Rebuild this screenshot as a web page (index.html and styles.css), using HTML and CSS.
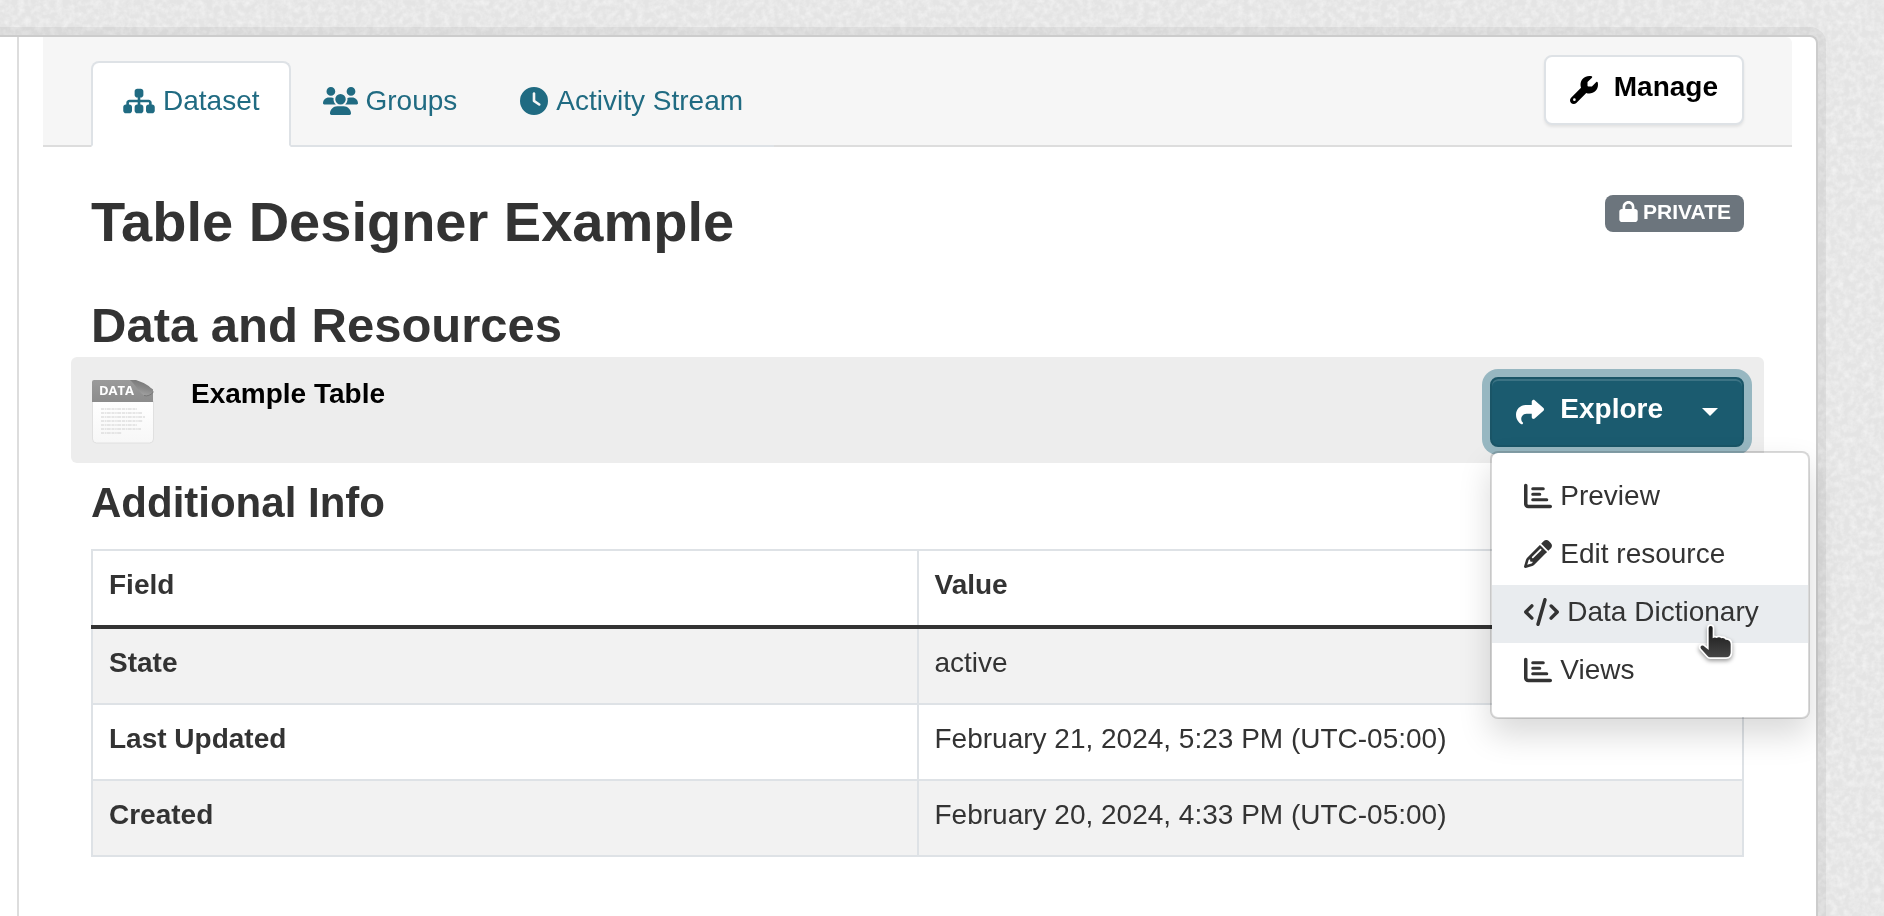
FILE: index.html
```html
<!DOCTYPE html>
<html lang="en">
<head>
<meta charset="utf-8">
<title>Table Designer Example</title>
<link rel="stylesheet" href="styles.css">
</head>
<body>
<svg class="grain" aria-hidden="true">
  <filter id="grain" x="0" y="0" width="100%" height="100%">
    <feTurbulence type="fractalNoise" baseFrequency="0.16" numOctaves="3" seed="4"/>
    <feColorMatrix values="0 0 0 0 1  0 0 0 0 1  0 0 0 0 1  0.9 0 0 0 -0.3"/>
  </filter>
  <rect width="100%" height="100%" filter="url(#grain)"/>
</svg>
<div class="wrapper">
  <aside class="secondary"></aside>
  <main class="primary">
    <header class="page-header">
      <nav class="tabs">
        <a class="tab tab-active" href="#dataset"><svg class="icon w-32" viewBox="0 0 576 512"><path d="M208 80c0-26.500 21.500-48 48-48h64c26.500 0 48 21.500 48 48v64c0 26.500-21.500 48-48 48h-8v40H464c30.900 0 56 25.100 56 56v32h8c26.500 0 48 21.500 48 48v64c0 26.500-21.500 48-48 48H464c-26.500 0-48-21.500-48-48V368c0-26.500 21.500-48 48-48h8V288c0-4.400-3.600-8-8-8H312v40h8c26.500 0 48 21.500 48 48v64c0 26.500-21.500 48-48 48H256c-26.500 0-48-21.500-48-48V368c0-26.500 21.500-48 48-48h8V280H112c-4.400 0-8 3.600-8 8v32h8c26.500 0 48 21.500 48 48v64c0 26.500-21.500 48-48 48H48c-26.500 0-48-21.500-48-48V368c0-26.500 21.500-48 48-48h8V288c0-30.900 25.100-56 56-56H264V192h-8c-26.500 0-48-21.500-48-48V80z"/></svg>Dataset</a>
        <a class="tab" href="#groups"><svg class="icon w-35" viewBox="0 0 640 512"><path d="M144 0a80 80 0 1 1 0 160A80 80 0 1 1 144 0zM512 0a80 80 0 1 1 0 160A80 80 0 1 1 512 0zM0 298.700C0 239.800 47.800 192 106.700 192h42.700c15.900 0 31 3.500 44.600 9.700c-1.300 7.200-1.900 14.700-1.900 22.300c0 38.200 16.800 72.500 43.300 96c-.2 0-.4 0-.7 0H21.300C9.600 320 0 310.400 0 298.700zM405.300 320c-.2 0-.4 0-.7 0c26.600-23.500 43.300-57.800 43.300-96c0-7.600-.7-15-1.900-22.300c13.600-6.300 28.700-9.700 44.600-9.700h42.700C592.200 192 640 239.800 640 298.700c0 11.800-9.600 21.300-21.300 21.300H405.300zM224 224a96 96 0 1 1 192 0 96 96 0 1 1 -192 0zM128 485.300C128 411.700 187.700 352 261.300 352H378.700C452.300 352 512 411.700 512 485.300c0 14.700-11.900 26.700-26.700 26.700H154.700c-14.700 0-26.700-11.900-26.700-26.700z"/></svg>Groups</a>
        <a class="tab" href="#activity"><svg class="icon" viewBox="0 0 512 512"><path d="M256 0a256 256 0 1 1 0 512A256 256 0 1 1 256 0zM232 120V256c0 8 4 15.500 10.700 20l96 64c11 7.400 25.900 4.400 33.300-6.700s4.400-25.900-6.700-33.300L280 243.200V120c0-13.300-10.700-24-24-24s-24 10.700-24 24z"/></svg>Activity Stream</a>
      </nav>
      <a class="btn btn-light" href="#manage"><svg class="icon" viewBox="0 0 512 512"><path d="M352 320c88.400 0 160-71.600 160-160c0-15.300-2.200-30.100-6.200-44.200c-3.100-10.800-16.400-13.200-24.300-5.300l-76.800 76.800c-3 3-7.100 4.700-11.300 4.700H336c-8.800 0-16-7.200-16-16V118.600c0-4.200 1.700-8.300 4.700-11.300l76.800-76.800c7.900-7.900 5.400-21.200-5.300-24.300C382.100 2.200 367.300 0 352 0C263.600 0 192 71.600 192 160c0 19.100 3.400 37.500 9.500 54.500L19.900 396.100C7.200 408.800 0 426.100 0 444.100C0 481.600 30.400 512 67.900 512c18 0 35.300-7.200 48-19.900L297.500 310.500c17 6.200 35.400 9.500 54.500 9.500zM80 408a24 24 0 1 1 0 48 24 24 0 1 1 0-48z"/></svg>Manage</a>
    </header>
    <article class="content">
      <div class="title-row">
        <h1>Table Designer Example</h1>
        <span class="badge"><svg viewBox="0 0 448 512"><path d="M144 144v48H304V144c0-44.200-35.800-80-80-80s-80 35.800-80 80zM80 192V144C80 64.500 144.500 0 224 0s144 64.500 144 144v48h16c35.300 0 64 28.700 64 64V448c0 35.300-28.700 64-64 64H64c-35.300 0-64-28.700-64-64V256c0-35.300 28.700-64 64-64H80z"/></svg>PRIVATE</span>
      </div>
      <section>
        <h2>Data and Resources</h2>
        <div class="resource">
          <svg class="filetype" viewBox="0 0 64 64" aria-hidden="true">
            <defs>
              <linearGradient id="band" x1="0" y1="0" x2="0" y2="1"><stop offset="0" stop-color="#9a9a9a"/><stop offset="1" stop-color="#8c8c8c"/></linearGradient>
              <linearGradient id="curl" x1="0.300" y1="1" x2="0.700" y2="0"><stop offset="0" stop-color="#a8a8a8"/><stop offset="0.500" stop-color="#8a8a8a"/><stop offset="1" stop-color="#747474"/></linearGradient>
              <linearGradient id="sheet" x1="0" y1="0" x2="0" y2="1"><stop offset="0" stop-color="#ffffff"/><stop offset="1" stop-color="#f7f7f7"/></linearGradient>
            </defs>
            <path d="M1.500 21H62.500V59a4 4 0 0 1-4 4H5.500a4 4 0 0 1-4-4z" fill="url(#sheet)" stroke="#e0e0e0"/>
            <path d="M1 2a2 2 0 0 1 2-2H44L62 9V22H1z" fill="url(#band)"/>
            <path d="M44 0L64 0V10L62 9z" fill="#eeeeee"/>
            <path d="M39 0H45Q60 5 62.500 12Q58 17 53 15.500C47 11 44 4 39 0z" fill="url(#curl)"/>
            <path d="M62.500 12Q58 17 53 15.500" fill="none" stroke="#777777"/>
            <text class="filetype-label" x="8" y="15">DATA</text>
            <g fill="none" stroke="#d0d0d0" stroke-width="1" stroke-dasharray="3 .7 1.500 .5 4 .8">
              <path d="M10 29H46M10 33H51M10 37H54M10 41H52M10 45H46M10 49H50M10 53H31"/>
            </g>
          </svg>
          <a class="resource-name" href="#resource">Example Table</a>
          <div class="dropdown">
            <button class="btn btn-primary" type="button" aria-expanded="true"><svg class="icon" viewBox="0 0 512 512"><path d="M307 34.800c-11.500 5.100-19 16.600-19 29.200v64H176C78.800 128 0 206.800 0 304C0 417.300 81.500 467.900 100.200 478.100c2.500 1.400 5.300 1.900 8.100 1.900c10.900 0 19.700-8.900 19.700-19.700c0-7.500-4.300-14.400-9.800-19.500C108.800 431.900 96 414.400 96 384c0-53 43-96 96-96h96v64c0 12.600 7.400 24.100 19 29.200s25 3 34.400-5.400l160-144c6.700-6.100 10.600-14.700 10.600-23.800s-3.800-17.700-10.600-23.800l-160-144c-9.400-8.500-22.900-10.600-34.400-5.400z"/></svg>Explore<span class="caret"></span></button>
            <ul class="menu">
              <li><a class="menu-item" href="#preview"><svg class="icon" viewBox="0 0 512 512"><path d="M32 32c17.700 0 32 14.300 32 32V400c0 8.800 7.200 16 16 16H480c17.700 0 32 14.300 32 32s-14.300 32-32 32H80c-44.200 0-80-35.800-80-80V64C0 46.300 14.300 32 32 32zM160 96H352a28 28 0 0 1 0 56H160a28 28 0 0 1 0-56zM160 196H288a28 28 0 0 1 0 56H160a28 28 0 0 1 0-56zM160 296H416a28 28 0 0 1 0 56H160a28 28 0 0 1 0-56z"/></svg>Preview</a></li>
              <li><a class="menu-item" href="#edit"><svg class="icon" viewBox="0 0 512 512"><path d="M410.300 231l11.300-11.300-33.900-33.900-62.100-62.100L291.700 89.800l-11.300 11.300-22.600 22.600L58.600 322.900c-10.400 10.400-18 23.300-22.200 37.400L1 480.700c-2.500 8.400-.2 17.500 6.100 23.700s15.300 8.500 23.700 6.100l120.300-35.400c14.100-4.200 27-11.800 37.400-22.200L387.700 253.700 410.300 231zM160 399.400l-9.100 22.700c-4 3.100-8.500 5.400-13.300 6.900L59.400 452l23-78.100c1.400-4.900 3.800-9.400 6.900-13.300l22.700-9.100v32c0 8.800 7.200 16 16 16h32zM362.700 18.700L348.300 33.200 325.700 55.800 314.300 67.100l33.900 33.900 62.100 62.100 33.900 33.900 11.300-11.300 22.600-22.600 14.500-14.500c25-25 25-65.500 0-90.500L453.300 18.700c-25-25-65.500-25-90.500 0zm-47.400 168l-144 144c-6.200 6.200-16.400 6.200-22.600 0s-6.200-16.400 0-22.600l144-144c6.200-6.200 16.400-6.200 22.600 0s6.200 16.400 0 22.600z"/></svg>Edit resource</a></li>
              <li><a class="menu-item menu-item-hover" href="#dictionary"><svg class="icon w-35" viewBox="0 0 640 512"><path d="M392.800 1.200c-17-4.900-34.700 5-39.600 22l-128 448c-4.900 17 5 34.700 22 39.600s34.700-5 39.600-22l128-448c4.900-17-5-34.700-22-39.600zm80.600 120.100c-12.500 12.500-12.500 32.800 0 45.300L562.700 256l-89.400 89.400c-12.500 12.500-12.500 32.800 0 45.300s32.800 12.500 45.300 0l112-112c12.500-12.500 12.500-32.800 0-45.300l-112-112c-12.500-12.500-32.800-12.500-45.300 0zm-306.700 0c-12.500-12.500-32.800-12.500-45.300 0l-112 112c-12.500 12.500-12.500 32.800 0 45.300l112 112c12.500 12.500 32.800 12.500 45.300 0s12.500-32.800 0-45.300L77.300 256l89.400-89.400c12.500-12.500 12.500-32.800 0-45.300z"/></svg>Data Dictionary</a>
                <svg class="pointer" viewBox="0 0 120 126" aria-hidden="true">
                  <defs><linearGradient id="hand" x1="0" y1="0" x2="0" y2="1"><stop offset="0" stop-color="#161616"/><stop offset="1" stop-color="#454545"/></linearGradient></defs>
                  <path d="M32 15Q32 9 38 9Q44 9 44 15V46Q50 41 56 45Q64 40 70 46Q78 43 83 50Q98 50 98 64V88Q98 103 84 103H36Q32 103 28 98L9 77Q5 71 10 68Q15 66 20 71L32 81Z" fill="url(#hand)" stroke="#ffffff" stroke-width="10" stroke-linejoin="round" paint-order="stroke"/>
                </svg>
              </li>
              <li><a class="menu-item" href="#views"><svg class="icon" viewBox="0 0 512 512"><path d="M32 32c17.700 0 32 14.300 32 32V400c0 8.800 7.200 16 16 16H480c17.700 0 32 14.300 32 32s-14.300 32-32 32H80c-44.200 0-80-35.800-80-80V64C0 46.300 14.300 32 32 32zM160 96H352a28 28 0 0 1 0 56H160a28 28 0 0 1 0-56zM160 196H288a28 28 0 0 1 0 56H160a28 28 0 0 1 0-56zM160 296H416a28 28 0 0 1 0 56H160a28 28 0 0 1 0-56z"/></svg>Views</a></li>
            </ul>
          </div>
        </div>
      </section>
      <section>
        <h3>Additional Info</h3>
        <table class="info">
          <thead><tr><th scope="col">Field</th><th scope="col">Value</th></tr></thead>
          <tbody>
            <tr><th scope="row">State</th><td>active</td></tr>
            <tr><th scope="row">Last Updated</th><td>February 21, 2024, 5:23 PM (UTC-05:00)</td></tr>
            <tr><th scope="row">Created</th><td>February 20, 2024, 4:33 PM (UTC-05:00)</td></tr>
          </tbody>
        </table>
      </section>
    </article>
  </main>
</div>
</body>
</html>
```

FILE: styles.css
```css
* { box-sizing: border-box; }

body {
  margin: 0;
  background: #e4e4e4;
  color: #333;
  font: 28px/42px "Liberation Sans", Arial, sans-serif;
}

a { color: inherit; text-decoration: none; }
h1, h2, h3 { margin: 0; font-weight: 700; }
h1 { font-size: 56px; line-height: 67px; }
h2 { font-size: 49px; line-height: 59px; margin-bottom: 2px; }
h3 { font-size: 42px; line-height: 50px; margin-bottom: 21px; }

.grain {
  position: fixed;
  inset: 0;
  width: 100%;
  height: 100%;
  z-index: -1;
}

.wrapper {
  position: relative;
  display: flex;
  min-height: calc(100vh - 35px);
  margin: 35px 66px 0 0;
  border: 2px solid #ccc;
  border-width: 2px 2px 0 0;
  border-radius: 0 8px 0 0;
  background: #fff;
  box-shadow: 0 0 0 8px rgba(0, 0, 0, .05);
}

.secondary {
  flex: 0 0 19px;
  border-right: 2px solid #ddd;
}
.primary { flex: 1; min-width: 0; }

.page-header {
  display: flex;
  justify-content: space-between;
  align-items: flex-start;
  margin: 0 24px;
  padding: 18px 48px 0;
  border-bottom: 2px solid #ddd;
  border-radius: 0 6px 0 0;
  background: #f6f6f6;
}

.tabs {
  display: flex;
  margin: 6px 0 -2px;
  border-bottom: 2px solid #dee2e6;
}
.tab {
  display: flex;
  align-items: center;
  gap: 8px;
  margin-bottom: -2px;
  padding: 17px 29px 23px 30px;
  border: 2px solid transparent;
  border-radius: 8px 8px 0 0;
  color: #206b82;
}
.tab-active {
  border-color: #dee2e6 #dee2e6 #fff;
  background: #fff;
}

.icon {
  flex: none;
  width: 28px;
  height: 28px;
  fill: currentColor;
}
.w-32 { width: 32px; }
.w-35 { width: 35px; }

.btn {
  display: flex;
  align-items: center;
  gap: 16px;
  padding: 9px 24px 15px;
  border: 2px solid;
  border-radius: 8px;
  font: inherit;
  font-weight: 700;
}
.btn .icon { margin-top: 5px; }
.btn-light {
  border-color: #dee2e6;
  background: #fff;
  color: #000;
  box-shadow: 0 2px 3px rgba(0, 0, 0, .08);
}
.btn-primary {
  border-color: #1a5567;
  background: #1b5b6f;
  color: #fff;
  box-shadow: inset 0 2px 0 rgba(255, 255, 255, .15), 0 0 0 8px rgba(65, 129, 149, .5);
}
.caret {
  margin: 6px 0 0 23px;
  border: 8px solid transparent;
  border-top-color: #fff;
  border-bottom: 0;
}

.content { padding: 41px 72px; }

.title-row {
  display: flex;
  justify-content: space-between;
  align-items: flex-start;
  margin-bottom: 41px;
}
.badge {
  display: flex;
  align-items: center;
  gap: 5px;
  margin-top: 7px;
  padding: 6px 13px 10px 14px;
  border-radius: 8px;
  background: #6c757d;
  color: #fff;
  font-size: 21px;
  font-weight: 700;
  line-height: 21px;
}
.badge svg { width: 19px; height: 21px; fill: currentColor; }

.resource {
  display: flex;
  align-items: flex-start;
  margin: 0 -20px 15px;
  padding: 16px 20px;
  border-radius: 6px;
  background: #ededed;
}
.filetype {
  flex: none;
  width: 64px;
  height: 64px;
  margin: 7px 36px 0 0;
}
.filetype-label {
  fill: #fff;
  font: 700 13px "Open Sans", sans-serif;
}
.resource-name {
  flex: 1;
  color: #000;
  font-weight: 700;
}

.dropdown { position: relative; padding-top: 4px; }
.menu {
  position: absolute;
  z-index: 1;
  top: 78px;
  left: 0;
  min-width: 320px;
  margin: 0;
  padding: 16px 0;
  border: 2px solid rgba(0, 0, 0, .15);
  border-radius: 8px;
  background: #fff;
  background-clip: padding-box;
  box-shadow: 0 16px 32px rgba(0, 0, 0, .15);
  list-style: none;
}
.menu li { position: relative; }
.menu-item {
  display: flex;
  align-items: center;
  gap: 8px;
  padding: 6px 32px 10px;
  white-space: nowrap;
}
.menu-item-hover { background: #e9ecef; }
.pointer {
  position: absolute;
  z-index: 1;
  top: 38px;
  left: 206px;
  width: 40px;
  height: 42px;
  overflow: visible;
  filter: drop-shadow(0 2px 2px rgba(0, 0, 0, .4));
}

.info {
  width: 100%;
  border-collapse: collapse;
  table-layout: fixed;
}
.info th, .info td {
  padding: 13px 16px 19px;
  border: 2px solid #dee2e6;
  text-align: left;
}
.info thead th { border-bottom: 4px solid #333; }
.info tbody tr:nth-child(odd) { background: #f2f2f2; }
```
